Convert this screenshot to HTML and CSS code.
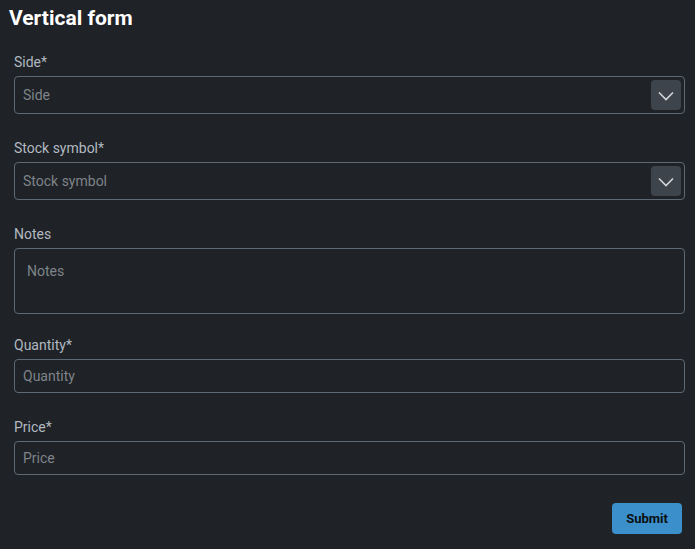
FILE: index.html
```html
<!DOCTYPE html>
<html>
<head>
<meta charset="utf-8">
<link rel="stylesheet" href="styles.css">
</head>
<body>
<h1 class="title">Vertical form</h1>
<form class="form">
  <div class="field">
    <label class="label">Side*</label>
    <div class="select">
      <span class="placeholder">Side</span>
      <span class="dd-btn"><svg width="16" height="10" viewBox="0 0 16 10"><path d="M1 1.5 L8 8.5 L15 1.5" fill="none" stroke="#d2d6da" stroke-width="1.6"/></svg></span>
    </div>
  </div>
  <div class="field">
    <label class="label">Stock symbol*</label>
    <div class="select">
      <span class="placeholder">Stock symbol</span>
      <span class="dd-btn"><svg width="16" height="10" viewBox="0 0 16 10"><path d="M1 1.5 L8 8.5 L15 1.5" fill="none" stroke="#d2d6da" stroke-width="1.6"/></svg></span>
    </div>
  </div>
  <div class="field field-notes">
    <label class="label">Notes</label>
    <div class="textarea"><span class="placeholder">Notes</span></div>
  </div>
  <div class="field">
    <label class="label">Quantity*</label>
    <div class="input"><span class="placeholder">Quantity</span></div>
  </div>
  <div class="field field-last">
    <label class="label">Price*</label>
    <div class="input"><span class="placeholder">Price</span></div>
  </div>
  <div class="actions">
    <button type="button" class="submit">Submit</button>
  </div>
</form>
</body>
</html>
```
FILE: styles.css
```css
html, body {
  margin: 0;
  padding: 0;
  background: #1f2226;
  font-family: Roboto, "Liberation Sans", sans-serif;
}
body {
  width: 695px;
  height: 549px;
  overflow: hidden;
}
.title {
  margin: 0;
  padding: 6px 0 0 9px;
  height: 52px;
  box-sizing: border-box;
  font-size: 21px;
  line-height: 25px;
  font-weight: 700;
  color: #ffffff;
}
.form {
  padding: 0 10px 0 14px;
}
.field {
  display: flex;
  flex-direction: column;
  margin-bottom: 24px;
}
.field-notes {
  margin-bottom: 21px;
}
.field-last {
  margin-bottom: 28px;
}
.label {
  font-size: 14px;
  line-height: 20px;
  height: 20px;
  margin-bottom: 4px;
  color: #b1b9c1;
}
.placeholder {
  font-size: 14px;
  color: #7e848a;
}
.select, .input, .textarea {
  box-sizing: border-box;
  border: 1px solid #5f6973;
  border-radius: 4px;
  display: flex;
  align-items: center;
}
.select {
  height: 38px;
  padding: 0 3px 0 8px;
  justify-content: space-between;
}
.input {
  height: 34px;
  padding: 0 8px;
}
.textarea {
  height: 66px;
  padding: 12px 12px;
  align-items: flex-start;
  line-height: 20px;
}
.dd-btn {
  width: 30px;
  height: 30px;
  border-radius: 4px;
  background: #3d444b;
  display: flex;
  align-items: center;
  justify-content: center;
}
.dd-btn svg {
  display: block;
  margin-top: 1px;
}
.actions {
  display: flex;
  justify-content: flex-end;
  padding-right: 3px;
}
.submit {
  width: 70px;
  height: 31px;
  border: none;
  border-radius: 4px;
  background: #3b8fca;
  color: #0c0f12;
  font-family: Roboto, "Liberation Sans", sans-serif;
  font-size: 13px;
  font-weight: 700;
  padding: 0;
}
```
